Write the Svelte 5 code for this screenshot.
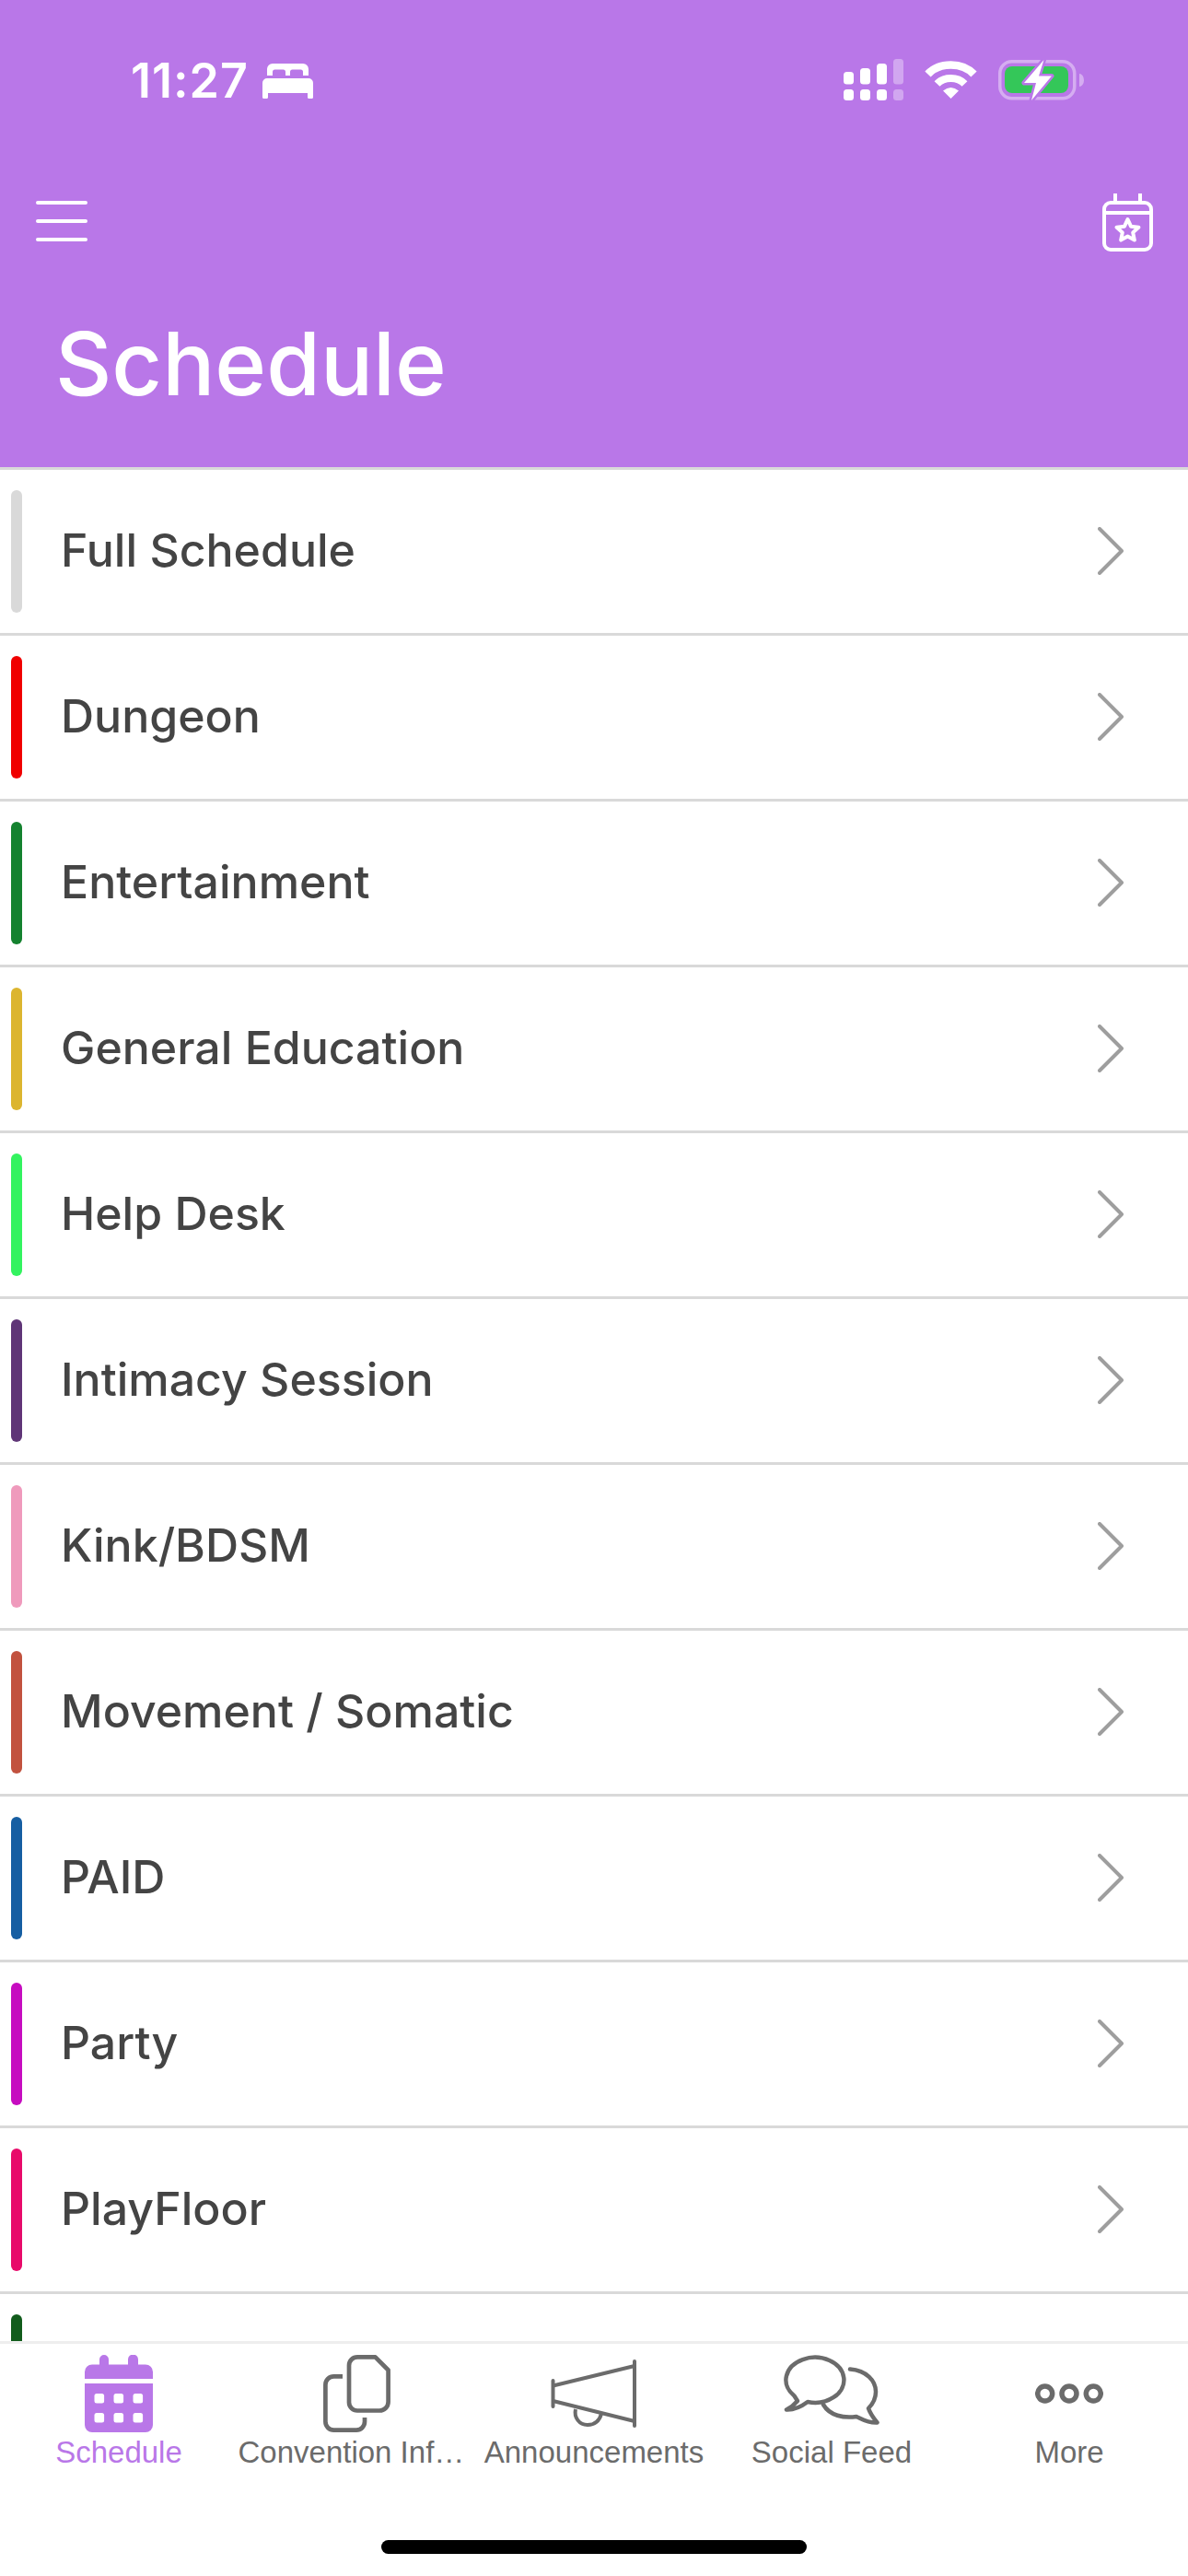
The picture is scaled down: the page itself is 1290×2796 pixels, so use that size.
<script>
  const rows = [
    { label: "Full Schedule", color: "#d9d9d9" },
    { label: "Dungeon", color: "#f00000" },
    { label: "Entertainment", color: "#14822f" },
    { label: "General Education", color: "#dcb52f" },
    { label: "Help Desk", color: "#33f35f" },
    { label: "Intimacy Session", color: "#5f3577" },
    { label: "Kink/BDSM", color: "#ef9abc" },
    { label: "Movement / Somatic", color: "#c2523f" },
    { label: "PAID", color: "#165ea2" },
    { label: "Party", color: "#c60cc0" },
    { label: "PlayFloor", color: "#e80a6a" },
    { label: "", color: "#125c1c" },
  ];
</script>

<div class="screen">
  <header class="header">
    <div class="status">
      <div class="status-left">
        <span class="time">11:27</span>
        <svg class="bed" viewBox="0 0 55 38" width="55" height="38" aria-hidden="true">
          <path fill="#fff" fill-rule="evenodd" d="M5 13V6a6 6 0 0 1 6-6h33a6 6 0 0 1 6 6v7h-6V9a2.500 2.500 0 0 0-2.500-2.500h-9A2.500 2.500 0 0 0 30 9v4h-5V9a2.500 2.500 0 0 0-2.500-2.500h-9A2.500 2.500 0 0 0 11 9v4z" />
          <path fill="#fff" d="M5 16h45a5 5 0 0 1 5 5v15.500a1.500 1.500 0 0 1-1.500 1.500h-3a1.500 1.500 0 0 1-1.500-1.500V32H6v4.500A1.500 1.500 0 0 1 4.500 38h-3A1.500 1.500 0 0 1 0 36.500V21a5 5 0 0 1 5-5z" />
        </svg>
      </div>
      <div class="status-right">
        <svg viewBox="0 0 65 45" width="65" height="45" aria-hidden="true">
          <g fill="#fff">
            <rect x="0" y="14" width="11" height="13.500" rx="3.500" />
            <rect x="18" y="10" width="11" height="17.500" rx="3.500" />
            <rect x="36" y="5" width="11" height="22.500" rx="3.500" />
            <rect x="0" y="33" width="11" height="12" rx="3.500" />
            <rect x="18" y="33" width="11" height="12" rx="3.500" />
            <rect x="36" y="33" width="11" height="12" rx="3.500" />
            <g opacity="0.35">
              <rect x="54" y="0" width="11" height="27.500" rx="3.500" />
              <rect x="54" y="33" width="11" height="12" rx="3.500" />
            </g>
          </g>
        </svg>
        <svg class="wifi" viewBox="0 0 57 42" width="57" height="42" aria-hidden="true">
          <g fill="none" stroke="#fff">
            <path stroke-width="8.500" d="M3.500 15.500C16 2 41 2 53.500 15.500" />
            <path stroke-width="8" d="M13.500 26C21 18 36 18 43.500 26" />
          </g>
          <path fill="#fff" d="M20 33.500Q28.500 26.500 37 33.500L28.500 42z" />
        </svg>
        <svg class="battery" viewBox="0 0 93 46" width="93" height="46" aria-hidden="true">
          <rect x="1.750" y="2.750" width="81" height="40" rx="13" fill="none" stroke="#fff" stroke-opacity="0.4" stroke-width="3.500" />
          <rect x="7" y="8" width="69" height="29" rx="8" fill="#34c759" />
          <path d="M88 16a5 7 0 0 1 5 7 5 7 0 0 1-5 7z" fill="#fff" fill-opacity="0.4" />
          <path d="M49.500 1 28 26h13l-5 19 22-26.500H44z" fill="#fff" stroke="#b977e8" stroke-width="5" stroke-linejoin="round" paint-order="stroke" />
        </svg>
      </div>
    </div>
    <div class="actions">
      <div class="burger" aria-label="Menu"><span></span><span></span><span></span></div>
      <svg viewBox="0 0 55 63" width="55" height="63" aria-hidden="true">
        <g fill="none" stroke="#fff" stroke-width="4">
          <path d="M14 0v10M41 0v10" />
          <rect x="2" y="10" width="51" height="51" rx="7" />
          <path d="M2 21h51" />
          <path stroke-linejoin="round" d="M27.500 28 31 35.700l8.400 1-6.200 5.700 1.650 8.200-7.350-4.100-7.350 4.100 1.650-8.200-6.200-5.700 8.400-1z" />
        </g>
      </svg>
    </div>
    <h1 class="title">Schedule</h1>
  </header>

  <div class="list">
    {#each rows as row}
      <div class="row">
        <span class="bar" style="background: {row.color}"></span>
        <span class="label">{row.label}</span>
        {#if row.label}
          <svg class="chevron" viewBox="0 0 28 52" width="28" height="52" aria-hidden="true">
            <path d="M2 2l24 24L2 50" fill="none" stroke="#9e9e9e" stroke-width="4" stroke-linecap="round" stroke-linejoin="round" />
          </svg>
        {/if}
      </div>
    {/each}
  </div>

  <nav class="tabs">
    <div class="tab active">
      <div class="tab-icon">
        <svg viewBox="0 0 74 84" width="74" height="84" aria-hidden="true">
          <path fill="#b977e8" d="M16 10.500V5a5 5 0 0 1 10 0v5.500h21V5a5 5 0 0 1 11 0v5.500h8a8 8 0 0 1 8 8V26H0v-7.500a8 8 0 0 1 8-8z" />
          <path fill="#b977e8" d="M0 31h74v45a8 8 0 0 1-8 8H8a8 8 0 0 1-8-8z" />
          <g fill="#fff">
            <rect x="10.500" y="42" width="10.600" height="10.600" rx="2.500" />
            <rect x="31.500" y="42" width="10.600" height="10.600" rx="2.500" />
            <rect x="52.500" y="42" width="10.600" height="10.600" rx="2.500" />
            <rect x="10.500" y="63" width="10.600" height="10.600" rx="2.500" />
            <rect x="31.500" y="63" width="10.600" height="10.600" rx="2.500" />
            <rect x="52.500" y="63" width="10.600" height="10.600" rx="2.500" />
          </g>
        </svg>
      </div>
      <span class="tab-label">Schedule</span>
    </div>
    <div class="tab">
      <div class="tab-icon">
        <svg viewBox="0 0 73 84" width="73" height="84" aria-hidden="true">
          <g fill="none" stroke="#6b6b6b" stroke-width="4.700">
            <path stroke-linejoin="round" d="M37 2.400h19.500L70.600 16.500V51a9.500 9.500 0 0 1-9.500 9.500H37a9 9 0 0 1-9-9V11.400a9 9 0 0 1 9-9z" />
            <path d="M21 23.400H11.400a9 9 0 0 0-9 9V72.600a9 9 0 0 0 9 9H36a9 9 0 0 0 9-9V68" />
          </g>
        </svg>
      </div>
      <span class="tab-label truncated">Convention Inf…</span>
    </div>
    <div class="tab">
      <div class="tab-icon">
        <svg viewBox="0 0 94 74" width="94" height="74" aria-hidden="true">
          <g fill="none" stroke="#6b6b6b" stroke-width="4">
            <path stroke-linecap="round" d="M2.500 23v28M91 2v70" />
            <path d="M2.500 28.500 91 7M2.500 45 91 67" />
            <path d="M27 54c-2 9 4 17 13 17 8 0 13-5 15-12" />
          </g>
        </svg>
      </div>
      <span class="tab-label">Announcements</span>
    </div>
    <div class="tab">
      <div class="tab-icon">
        <svg viewBox="0 0 104 84" width="104" height="84" aria-hidden="true">
          <g fill="none" stroke="#6b6b6b" stroke-width="4.500" stroke-linecap="round" stroke-linejoin="round">
            <path d="M26 51A31.500 24.500 0 1 0 11.500 44.500L15 50Q10 56 3 59.500 14 60 26 51z" />
            <path d="M72 15.500C90 17 100 28 100 40 100 48 96 54 92 58 94 64 97 68 101.500 73.500 90 74 84 69 79 67 65 69 50 66 43 54" />
          </g>
        </svg>
      </div>
      <span class="tab-label">Social Feed</span>
    </div>
    <div class="tab">
      <div class="tab-icon">
        <svg viewBox="0 0 74 22" width="74" height="22" aria-hidden="true">
          <g fill="none" stroke="#6b6b6b" stroke-width="5.500">
            <circle cx="10.700" cy="11" r="8" />
            <circle cx="37" cy="11" r="8" />
            <circle cx="63.300" cy="11" r="8" />
          </g>
        </svg>
      </div>
      <span class="tab-label">More</span>
    </div>
  </nav>

  <div class="home-bar"><span></span></div>
</div>

<style>
  :global(body) {
    margin: 0;
    background: #fff;
  }
  .screen {
    display: flex;
    flex-direction: column;
    width: 1290px;
    height: 2796px;
    overflow: hidden;
    background: #fff;
  }
  .header {
    flex: none;
    height: 507px;
    box-sizing: border-box;
    padding-top: 63px;
    background: #b977e8;
    color: #fff;
  }
  .status {
    display: flex;
    justify-content: space-between;
    align-items: flex-start;
    height: 47px;
    padding: 0 113px 0 142px;
  }
  .status-left {
    display: flex;
    align-items: center;
    gap: 15px;
    margin-top: 6px;
  }
  .time {
    font-family: Inter, "Liberation Sans", sans-serif;
    font-size: 52px;
    font-weight: 600;
    line-height: 38px;
    letter-spacing: 1px;
  }
  .status-right {
    display: flex;
    align-items: flex-start;
    gap: 23px;
    margin-top: 1px;
  }
  .wifi {
    margin-top: 1px;
  }
  .actions {
    display: flex;
    justify-content: space-between;
    align-items: flex-start;
    margin-top: 100px;
    padding: 0 38px 0 39px;
  }
  .burger {
    display: flex;
    flex-direction: column;
    gap: 16px;
    width: 56px;
    padding-top: 8px;
  }
  .burger span {
    height: 4px;
    border-radius: 2px;
    background: #fff;
  }
  .title {
    margin: 72px 0 0 60px;
    font-family: Inter, "Liberation Sans", sans-serif;
    font-size: 95px;
    font-weight: 500;
    line-height: 100px;
  }
  .list {
    flex: 1;
    min-height: 0;
    overflow: hidden;
    border-top: 3px solid #d9d9d9;
  }
  .row {
    display: flex;
    align-items: center;
    height: 177px;
    border-bottom: 3px solid #d9d9d9;
  }
  .bar {
    flex: none;
    width: 12px;
    height: 133px;
    margin-left: 12px;
    border-radius: 6px;
  }
  .label {
    flex: 1;
    margin-left: 42px;
    padding-bottom: 3px;
    font-family: Inter, "Liberation Sans", sans-serif;
    font-size: 50px;
    font-weight: 500;
    color: #444;
  }
  .chevron {
    flex: none;
    margin-right: 70px;
    margin-bottom: 2px;
  }
  .tabs {
    flex: none;
    display: grid;
    grid-template-columns: repeat(5, 1fr);
    height: 163px;
    box-sizing: border-box;
    padding-top: 12px;
    border-top: 3px solid #eee;
    background: #fff;
  }
  .tab {
    display: flex;
    flex-direction: column;
    align-items: center;
    min-width: 0;
    color: #6b6b6b;
  }
  .tab.active {
    color: #b977e8;
  }
  .tab-icon {
    display: flex;
    align-items: center;
    justify-content: center;
    height: 84px;
  }
  .tab-label {
    width: 100%;
    margin-top: 4px;
    font-family: "Liberation Sans", Arial, sans-serif;
    font-size: 33px;
    line-height: 36px;
    text-align: center;
    white-space: nowrap;
  }
  .tab-label.truncated {
    text-align: left;
    padding-left: 1px;
  }
  .home-bar {
    flex: none;
    display: flex;
    justify-content: center;
    height: 92px;
    background: #fff;
  }
  .home-bar span {
    width: 462px;
    height: 15px;
    margin-top: 53px;
    border-radius: 8px;
    background: #000;
  }
</style>
